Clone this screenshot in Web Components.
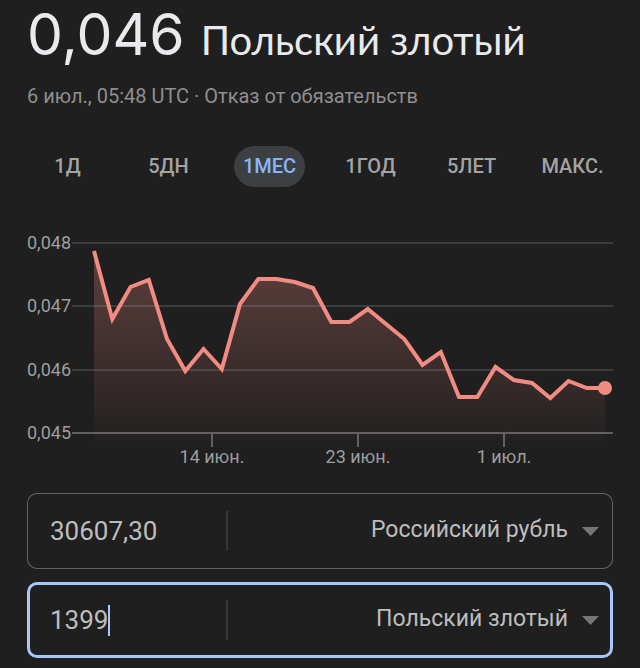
<!DOCTYPE html>
<html lang="ru">
<head>
<meta charset="UTF-8">
<meta name="viewport" content="width=device-width, initial-scale=1.0">
<title>Курс валют</title>
<style>
    :root{
        --bg: #1f1f1f;
        --text: #e8eaed;
        --muted: #8f8f8f;
        --label: #9e9e9e;
        --accent: #8ab4f8;
        --line: #f28b82;
    }
    body{
        margin: 0;
        background: var(--bg);
        color: var(--text);
        font-family: Roboto, "Liberation Sans", sans-serif;
    }
</style>
</head>
<body>
    <currency-card>
        <rate-header slot="header" value="0,046" currency="Польский злотый" date="6 июл., 05:48 UTC"></rate-header>
        <range-tabs slot="tabs" active="1МЕС"></range-tabs>
        <rate-chart slot="chart"></rate-chart>
        <currency-field slot="fields" value="30607,30" currency="Российский рубль"></currency-field>
        <currency-field slot="fields" value="1399" currency="Польский злотый" active></currency-field>
    </currency-card>

<script>
class CurrencyCard extends HTMLElement {
    constructor(){
        super();
        this.attachShadow({mode:'open'});
    }
    connectedCallback(){
        this.shadowRoot.innerHTML = `
        <style>
        :host{
            display: block;
        }
        main{
            display: flex;
            flex-direction: column;
        }
        .fields{
            display: flex;
            flex-direction: column;
            gap: 13px;
            padding: 18px 27px 8px;
        }
        </style>
        <main>
            <slot name="header"></slot>
            <slot name="tabs"></slot>
            <slot name="chart"></slot>
            <div class="fields"><slot name="fields"></slot></div>
        </main>
        `;
    }
}

class RateHeader extends HTMLElement {
    constructor(){
        super();
        this.attachShadow({mode:'open'});
    }
    connectedCallback(){
        this.shadowRoot.innerHTML = `
        <style>
        :host{
            display: block;
            padding: 0 27px;
        }
        h1{
            margin: 0;
            display: flex;
            align-items: baseline;
            gap: 16px;
            font-family: Lato, Roboto, sans-serif;
            font-weight: 400;
            line-height: 70px;
            white-space: nowrap;
        }
        .value{
            font-family: Inter, Roboto, sans-serif;
            font-size: 57px;
        }
        .currency{
            font-size: 40px;
        }
        p{
            margin: 9px 0 0;
            font-size: 20px;
            line-height: 24px;
            color: var(--muted);
        }
        a{
            color: inherit;
            text-decoration: none;
        }
        </style>
        <h1>
            <span class="value">${this.getAttribute('value')}</span>
            <span class="currency">${this.getAttribute('currency')}</span>
        </h1>
        <p>${this.getAttribute('date')} · <a href="#">Отказ от обязательств</a></p>
        `;
    }
}

class RangeTabs extends HTMLElement {
    constructor(){
        super();
        this.attachShadow({mode:'open'});
        this.ranges = ['1Д', '5ДН', '1МЕС', '1ГОД', '5ЛЕТ', 'МАКС.'];
    }
    connectedCallback(){
        const active = this.getAttribute('active');
        this.shadowRoot.innerHTML = `
        <style>
        :host{
            display: block;
            padding: 38px 17px 0;
        }
        nav{
            display: grid;
            grid-template-columns: repeat(6, 1fr);
            justify-items: center;
        }
        button{
            height: 41px;
            padding: 0 9px 2px;
            border: 0;
            border-radius: 21px;
            background: none;
            color: #a3a3a3;
            font: 500 20px Roboto, sans-serif;
            cursor: pointer;
        }
        button[aria-pressed="true"]{
            background: #3c4043;
            color: var(--accent);
        }
        </style>
        <nav>
            ${this.ranges.map(r => `<button type="button" aria-pressed="${r === active}">${r}</button>`).join('')}
        </nav>
        `;
        this.shadowRoot.querySelector('nav').addEventListener('click', e => {
            if(e.target.tagName !== 'BUTTON') return;
            this.shadowRoot.querySelectorAll('button').forEach(b => b.setAttribute('aria-pressed', b === e.target));
        });
    }
}

class RateChart extends HTMLElement {
    constructor(){
        super();
        this.attachShadow({mode:'open'});
        // height of each day's rate, from the top of the drawing
        this.points = [21, 89, 57, 50, 109, 141, 119, 139, 74, 49, 49, 52, 58, 92, 92,
            79, 94, 109, 135, 122, 167, 167, 137, 150, 153, 168, 151, 158, 158];
        this.levels = [['0,048', 13], ['0,047', 76], ['0,046', 140], ['0,045', 203]];
        this.dates = [['14 июн.', 185], ['23 июн.', 331], ['1 июл.', 477]];
    }
    connectedCallback(){
        const left = 67;
        const right = 578;
        const step = (right - left) / (this.points.length - 1);
        const path = this.points.map((y, i) => `${(left + i * step).toFixed(1)},${y}`).join(' ');
        const last = this.points[this.points.length - 1];

        this.shadowRoot.innerHTML = `
        <style>
        :host{
            display: block;
            padding: 43px 27px 0;
        }
        svg{
            display: block;
            width: 100%;
            overflow: visible;
        }
        text{
            font: 18px Roboto, sans-serif;
            fill: var(--label);
        }
        .dates text{
            text-anchor: middle;
        }
        .grid{
            stroke: #3a3d40;
            stroke-width: 2;
        }
        .axis{
            stroke: #5f6061;
        }
        .line{
            fill: none;
            stroke: var(--line);
            stroke-width: 4;
        }
        circle{
            fill: var(--line);
        }
        </style>
        <svg viewBox="0 0 586 245" role="img" aria-label="График курса за месяц">
            <defs>
                <linearGradient id="fade" x1="0" y1="21" x2="0" y2="211" gradientUnits="userSpaceOnUse">
                    <stop offset="0" stop-color="#f28b82" stop-opacity=".3"/>
                    <stop offset="1" stop-color="#f28b82" stop-opacity=".02"/>
                </linearGradient>
            </defs>
            ${this.levels.map(([label, y], i) => `
            <text x="0" y="${y + 6}">${label}</text>
            <line class="grid ${i === 3 ? 'axis' : ''}" x1="45" x2="586" y1="${y}" y2="${y}"/>`).join('')}
            <g class="dates">
            ${this.dates.map(([label, x]) => `
            <line class="grid axis" x1="${x}" x2="${x}" y1="203" y2="217"/>
            <text x="${x}" y="233">${label}</text>`).join('')}
            </g>
            <polygon points="${left},211 ${path} ${right},211" fill="url(#fade)"/>
            <polyline class="line" points="${path}"/>
            <circle cx="${right}" cy="${last}" r="7"/>
        </svg>
        `;
    }
}

class CurrencyField extends HTMLElement {
    constructor(){
        super();
        this.attachShadow({mode:'open'});
    }
    connectedCallback(){
        const value = this.getAttribute('value');
        const currency = this.getAttribute('currency');
        const names = ['Российский рубль', 'Польский злотый'];
        this.shadowRoot.innerHTML = `
        <style>
        *{
            box-sizing: border-box;
        }
        :host{
            display: block;
        }
        .field{
            display: grid;
            grid-template-columns: 201px 1fr;
            align-items: center;
            height: 76px;
            border-radius: 10px;
            box-shadow: inset 0 0 0 1px #5f6368;
        }
        :host([active]) .field{
            box-shadow: inset 0 0 0 3px #a8c7fa;
        }
        .amount{
            display: flex;
            align-items: center;
            height: 40px;
            padding-left: 23px;
            border-right: 2px solid #363739;
        }
        input{
            width: ${value.length}ch;
            height: 34px;
            padding: 0;
            border: 0;
            outline: 0;
            background: none;
            color: #bdbdbd;
            font: 26px Roboto, sans-serif;
        }
        .caret{
            display: none;
            width: 2px;
            height: 31px;
            background: #a8c7fa;
        }
        :host([active]) .caret{
            display: block;
        }
        :host([active]) input{
            caret-color: transparent;
        }
        .currency{
            display: flex;
            align-items: center;
            gap: 14px;
            padding-right: 14px;
        }
        select{
            appearance: none;
            flex: 1;
            min-width: 0;
            height: 40px;
            padding: 0 0 4px;
            border: 0;
            outline: 0;
            background: none;
            color: #bdbdbd;
            font: 23px Roboto, sans-serif;
            text-align-last: right;
        }
        option{
            background: var(--bg);
        }
        svg{
            width: 17px;
            height: 9px;
            fill: #757575;
            pointer-events: none;
        }
        </style>
        <div class="field">
            <div class="amount">
                <input type="text" inputmode="decimal" aria-label="Сумма" value="${value}">
                <span class="caret"></span>
            </div>
            <div class="currency">
                <select aria-label="Валюта">
                    ${names.map(n => `<option ${n === currency ? 'selected' : ''}>${n}</option>`).join('')}
                </select>
                <svg viewBox="0 0 17 9"><path d="M0 0h17L8.500 9z"/></svg>
            </div>
        </div>
        `;
        const input = this.shadowRoot.querySelector('input');
        input.addEventListener('input', () => {
            input.style.width = Math.max(input.value.length, 1) + 'ch';
        });
    }
}

customElements.define('currency-card', CurrencyCard);
customElements.define('rate-header', RateHeader);
customElements.define('range-tabs', RangeTabs);
customElements.define('rate-chart', RateChart);
customElements.define('currency-field', CurrencyField);
</script>
</body>
</html>
